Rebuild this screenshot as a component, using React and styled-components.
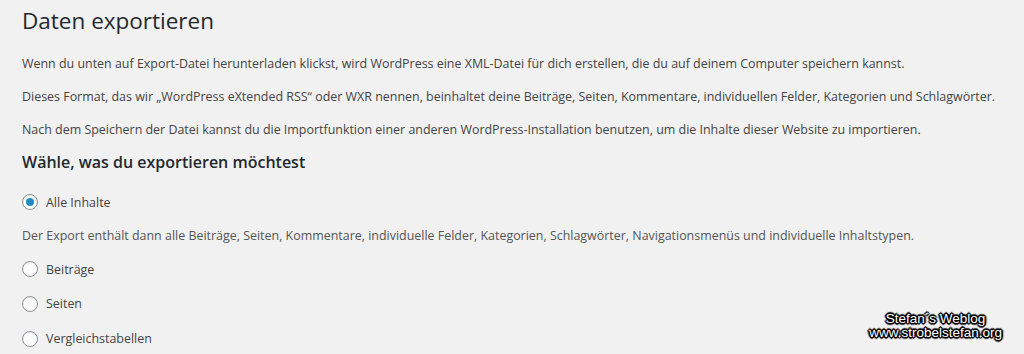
import React from 'react'
import styled, { createGlobalStyle } from 'styled-components'

const GlobalStyle = createGlobalStyle`
  html, body {
    margin: 0;
    padding: 0;
    background: #f1f1f1;
  }
  body {
    font-family: "Open Sans", "Noto Sans", sans-serif;
    color: #444;
    font-size: 12.45px;
  }
`

const Page = styled.div`
  position: relative;
  width: 1024px;
  height: 354px;
  overflow: hidden;
  padding: 0 22px;
  box-sizing: border-box;
  white-space: nowrap;
`

const Title = styled.h1`
  margin: 0;
  padding-top: 6px;
  font-size: 22.5px;
  font-weight: 400;
  line-height: 29px;
  color: #23282d;
`

const Para = styled.p`
  margin: 0;
  height: 33px;
  line-height: 33px;
  font-size: 12.45px;
  &:first-of-type {
    margin-top: 12px;
  }
`

const SubTitle = styled.h2`
  margin: 0;
  height: 33px;
  line-height: 33px;
  font-size: 16px;
  font-weight: 600;
  color: #23282d;
`

const Option = styled.label`
  display: flex;
  align-items: center;
  gap: 8px;
  height: ${p => p.$h || 34}px;
  font-size: 12.45px;
  margin-top: ${p => p.$top || 0}px;
`

const Radio = styled.span`
  width: 14px;
  height: 14px;
  border: 1px solid #8c8f94;
  border-radius: 50%;
  background: #fff;
  display: flex;
  align-items: center;
  justify-content: center;
  box-shadow: inset 0 1px 2px rgba(0, 0, 0, 0.1);
  &::after {
    content: '';
    display: ${p => (p.$checked ? 'block' : 'none')};
    width: 8px;
    height: 8px;
    border-radius: 50%;
    background: #1e8cbe;
  }
`

const Hint = styled.p`
  margin: 0;
  height: 33px;
  line-height: 33px;
  font-size: 12.45px;
  color: #555;
`

const Watermark = styled.div`
  position: absolute;
  right: 22px;
  bottom: 14px;
  font-family: "Liberation Sans", Arial, sans-serif;
  font-size: 13.5px;
  line-height: 14px;
  text-align: center;
  color: #fff;
  text-shadow:
    -1px -1px 0 #000, 1px -1px 0 #000, -1px 1px 0 #000, 1px 1px 0 #000,
    0 -2px 1px #000, 0 2px 1px #000, -2px 0 1px #000, 2px 0 1px #000;
`

const App = () => {
  return (
    <>
      <GlobalStyle />
      <Page>
        <Title>Daten exportieren</Title>
        <Para>
          Wenn du unten auf Export-Datei herunterladen klickst, wird WordPress eine XML-Datei für dich erstellen, die du auf deinem Computer speichern kannst.
        </Para>
        <Para>
          Dieses Format, das wir „WordPress eXtended RSS“ oder WXR nennen, beinhaltet deine Beiträge, Seiten, Kommentare, individuellen Felder, Kategorien und Schlagwörter.
        </Para>
        <Para>
          Nach dem Speichern der Datei kannst du die Importfunktion einer anderen WordPress-Installation benutzen, um die Inhalte dieser Website zu importieren.
        </Para>
        <SubTitle>Wähle, was du exportieren möchtest</SubTitle>
        <Option $top={6}>
          <Radio $checked />
          Alle Inhalte
        </Option>
        <Hint>
          Der Export enthält dann alle Beiträge, Seiten, Kommentare, individuelle Felder, Kategorien, Schlagwörter, Navigationsmenüs und individuelle Inhaltstypen.
        </Hint>
        <Option>
          <Radio />
          Beiträge
        </Option>
        <Option $h={35}>
          <Radio />
          Seiten
        </Option>
        <Option $h={35}>
          <Radio />
          Vergleichstabellen
        </Option>
        <Watermark>
          Stefan´s Weblog
          <br />
          www.strobelstefan.org
        </Watermark>
      </Page>
    </>
  )
}

export default App
